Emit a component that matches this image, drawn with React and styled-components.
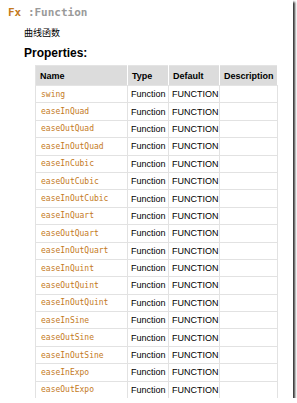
import React from 'react';
import styled, { createGlobalStyle } from 'styled-components';

const GlobalStyle = createGlobalStyle`
  html, body {
    margin: 0;
    padding: 0;
    background: #ffffff;
  }
`;

const props = [
  'swing', 'easeInQuad', 'easeOutQuad', 'easeInOutQuad', 'easeInCubic',
  'easeOutCubic', 'easeInOutCubic', 'easeInQuart', 'easeOutQuart',
  'easeInOutQuart', 'easeInQuint', 'easeOutQuint', 'easeInOutQuint',
  'easeInSine', 'easeOutSine', 'easeInOutSine', 'easeInExpo', 'easeOutExpo',
];

const App = () => (
  <>
    <GlobalStyle />
    <Frame>
      <Title>
        <Fx>Fx</Fx> <Kind>:Function</Kind>
      </Title>
      <Desc>曲线函数</Desc>
      <Heading>Properties:</Heading>
      <Table>
        <colgroup>
          <col style={{ width: 92 }} />
          <col style={{ width: 41 }} />
          <col style={{ width: 51 }} />
          <col style={{ width: 58 }} />
        </colgroup>
        <thead>
          <tr>
            <Th>Name</Th>
            <Th>Type</Th>
            <Th>Default</Th>
            <Th>Description</Th>
          </tr>
        </thead>
        <tbody>
          {props.map((name) => (
            <tr key={name}>
              <NameCell>{name}</NameCell>
              <Td>Function</Td>
              <Td>FUNCTION</Td>
              <Td></Td>
            </tr>
          ))}
        </tbody>
      </Table>
    </Frame>
  </>
);

export default App;

const Frame = styled.div`
  width: 293px;
  height: 398px;
  overflow: hidden;
  background: #ffffff;
  box-shadow: 2px 2px 2px rgba(0, 0, 0, 0.8);
  font-family: "Liberation Sans", Arial, sans-serif;
  color: #000;
`;

const Title = styled.div`
  font-family: "DejaVu Sans Mono", "Liberation Mono", monospace;
  font-size: 11px;
  font-weight: bold;
  line-height: 14px;
  padding: 6px 0 0 8px;
  white-space: pre;
`;

const Fx = styled.span`
  color: #c47a1c;
`;

const Kind = styled.span`
  color: #9a9a9a;
`;

const Desc = styled.div`
  font-family: "Noto Sans CJK SC", sans-serif;
  font-size: 9px;
  line-height: 12px;
  padding: 7px 0 0 24px;
`;

const Heading = styled.div`
  font-size: 12px;
  font-weight: bold;
  line-height: 14px;
  padding: 7px 0 0 24px;
`;

const Table = styled.table`
  margin: 5px 0 0 35px;
  border-collapse: collapse;
  table-layout: fixed;
  width: 242px;
  font-size: 9px;
`;

const Th = styled.th`
  background: #dcdcdc;
  border: 1px solid #e4e4e4;
  border-right-color: #ffffff;
  text-align: left;
  font-weight: bold;
  height: 19px;
  padding: 0 0 0 4px;
`;

const Td = styled.td`
  border: 1px solid #e2e2e2;
  height: 16.4px;
  padding: 0 0 0 3px;
  white-space: nowrap;
  overflow: hidden;
`;

const NameCell = styled(Td)`
  font-family: "DejaVu Sans Mono", "Liberation Mono", monospace;
  font-size: 8px;
  color: #c47a1c;
  padding-left: 5px;
`;
